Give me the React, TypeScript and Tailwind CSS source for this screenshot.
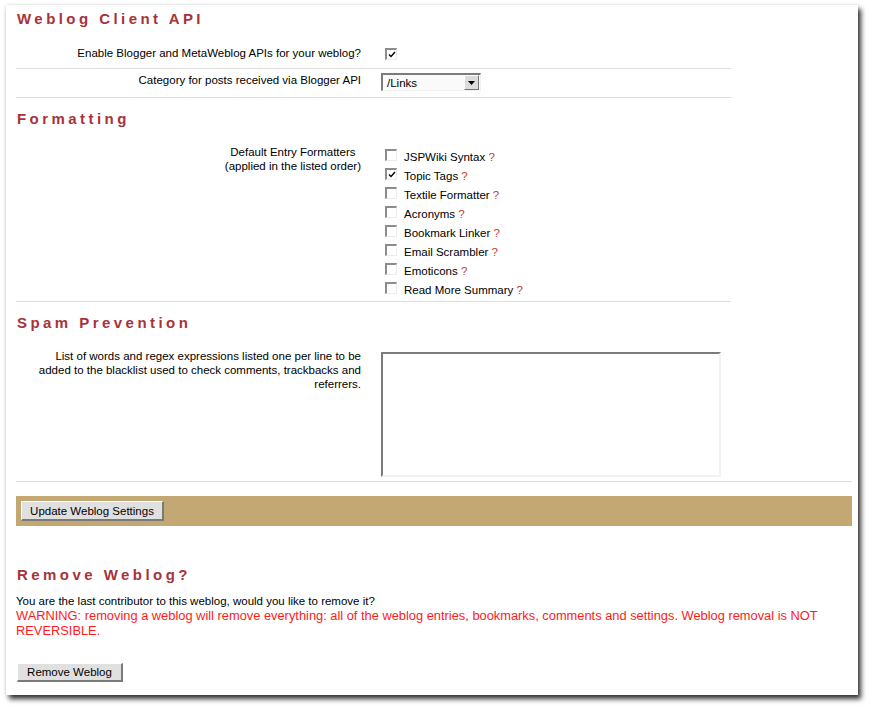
import React from 'react';

const FORMATTERS: { name: string; checked: boolean }[] = [
  { name: 'JSPWiki Syntax', checked: false },
  { name: 'Topic Tags', checked: true },
  { name: 'Textile Formatter', checked: false },
  { name: 'Acronyms', checked: false },
  { name: 'Bookmark Linker', checked: false },
  { name: 'Email Scrambler', checked: false },
  { name: 'Emoticons', checked: false },
  { name: 'Read More Summary', checked: false },
];

/** Old-style sunken checkbox, drawn by hand so it looks like the screenshot. */
function Check({ checked }: { checked: boolean }) {
  return (
    <span className="flex h-[12px] w-[12px] shrink-0 items-center justify-center border-t-2 border-l-2 border-r border-b border-t-[#8c8c8c] border-l-[#8c8c8c] border-r-[#ececec] border-b-[#ececec] bg-white">
      {checked && (
        <svg width="8" height="7" viewBox="0 0 8 7" aria-hidden="true">
          <path d="M1 3.5 L3 5.5 L7 1" fill="none" stroke="#000" strokeWidth="1.4" />
        </svg>
      )}
    </span>
  );
}

function Heading({ children, top = 11 }: { children: React.ReactNode; top?: number }) {
  return (
    <h2
      className={`h-[20px] text-[15px] leading-[20px] font-bold tracking-[0.23em] text-[#a8323a] ${
        top === 4 ? 'mt-[4px]' : top === 39 ? 'mt-[39px]' : 'mt-[11px]'
      } mb-[11px] pl-[1px]`}
    >
      {children}
    </h2>
  );
}

function Label({ children, className = '' }: { children: React.ReactNode; className?: string }) {
  return (
    <div className={`w-[345px] shrink-0 text-right text-[11.5px] leading-[14px] text-black ${className}`}>
      {children}
    </div>
  );
}

function Button({ children, className = '' }: { children: React.ReactNode; className?: string }) {
  return (
    <button
      type="button"
      className={`flex items-center justify-center border-t border-l border-r-2 border-b-2 border-t-white border-l-white border-r-[#7a7a7a] border-b-[#7a7a7a] bg-[#e0e0e0] text-[11.5px] leading-[14px] text-black ${className}`}
    >
      {children}
    </button>
  );
}

export default function App() {
  return (
    <div className="h-[710px] w-[872px] bg-white pt-[5px] pl-[6px] font-['Liberation_Sans',Arial,sans-serif]">
      <div className="flex h-[690px] w-[852px] flex-col bg-white pl-[10px] pr-[6px] shadow-[3px_4px_5px_rgba(0,0,0,0.8),0_0_3px_rgba(0,0,0,0.12)]">
        {/* Weblog Client API */}
        <Heading top={4}>Weblog Client API</Heading>

        <div className="flex h-[29px] w-[715px] border-b border-[#dddddd]">
          <Label className="pt-[6px]">Enable Blogger and MetaWeblog APIs for your weblog?</Label>
          <div className="ml-[24px] pt-[8px]">
            <Check checked />
          </div>
        </div>

        <div className="flex h-[29px] w-[715px] border-b border-[#dddddd]">
          <Label className="pt-[4px]">Category for posts received via Blogger API</Label>
          <div className="ml-[20px] pt-[4px]">
            <div className="flex h-[18px] w-[100px] items-center justify-between border-t-2 border-l-2 border-r border-b border-t-[#7c7c7c] border-l-[#7c7c7c] border-r-[#f0f0f0] border-b-[#f0f0f0] bg-[#fafafa] pl-[4px] pr-[1px]">
              <span className="text-[11.5px] leading-[14px] text-black">/Links</span>
              <span className="flex h-[15px] w-[15px] items-center justify-center border-t border-l border-r border-b border-t-white border-l-white border-r-[#777] border-b-[#777] bg-[#dcdcdc]">
                <svg width="7" height="4" viewBox="0 0 7 4" aria-hidden="true">
                  <path d="M0 0 H7 L3.5 4 Z" fill="#000" />
                </svg>
              </span>
            </div>
          </div>
        </div>

        {/* Formatting */}
        <Heading>Formatting</Heading>

        <div className="flex w-[715px] border-b border-[#dddddd] pb-[2px]">
          <Label className="pt-[5px]">
            <span className="inline-block text-center">
              Default Entry Formatters
              <br />
              (applied in the listed order)
            </span>
          </Label>
          <div className="ml-[24px] flex flex-col pt-[7px]">
            {FORMATTERS.map((f) => (
              <div key={f.name} className="flex h-[19px] items-start gap-[7px] pt-[2px]">
                <Check checked={f.checked} />
                <span className="text-[11.5px] leading-[16px] text-black">
                  {f.name} <span className="text-[#c0392b]">?</span>
                </span>
              </div>
            ))}
          </div>
        </div>

        {/* Spam Prevention */}
        <Heading>Spam Prevention</Heading>

        <div className="flex w-[836px] border-b border-[#dddddd] pb-[4px]">
          <Label className="pt-[5px] pl-[18px]">
            List of words and regex expressions listed one per line to be added to the blacklist used to
            check comments, trackbacks and referrers.
          </Label>
          <div className="ml-[20px] pt-[8px]">
            <div className="h-[125px] w-[340px] border-t-2 border-l-2 border-r-2 border-b-2 border-t-[#7c7c7c] border-l-[#7c7c7c] border-r-[#f2f2f2] border-b-[#f2f2f2] bg-white" />
          </div>
        </div>

        <div className="mt-[14px] flex h-[30px] w-[836px] items-start bg-[#c4a874] pt-[5px] pl-[5px]">
          <Button className="h-[20px] w-[143px]">Update Weblog Settings</Button>
        </div>

        {/* Remove Weblog */}
        <Heading top={39}>Remove Weblog?</Heading>

        <p className="-mt-[2px] text-[11.5px] leading-[14px] text-black">
          You are the last contributor to this weblog, would you like to remove it?
        </p>
        <p className="text-[12.85px] leading-[15px] text-[#ff1a1a]">
          WARNING: removing a weblog will remove everything: all of the weblog entries, bookmarks, comments and
          settings. Weblog removal is NOT REVERSIBLE.
        </p>

        <div className="mt-[25px] pl-[1px]">
          <Button className="h-[19px] w-[106px]">Remove Weblog</Button>
        </div>
      </div>
    </div>
  );
}
